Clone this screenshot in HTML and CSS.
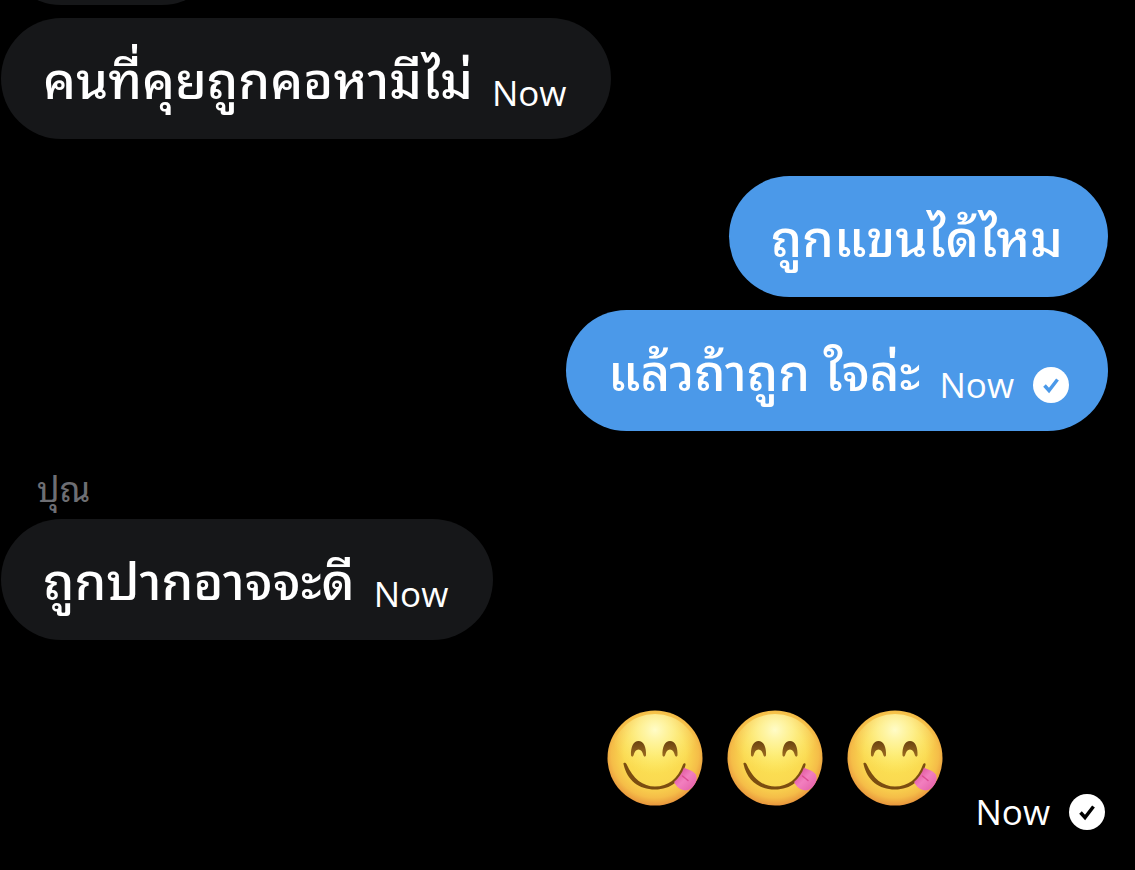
FILE: index.html
```html
<!DOCTYPE html>
<html lang="th">
<head>
    <meta charset="UTF-8">
    <meta name="viewport" content="width=device-width, initial-scale=1.0">
    <title>Chat</title>
    <link rel="stylesheet" href="styles.css">
</head>
<body>
    <svg class="defs" aria-hidden="true">
        <defs>
            <radialGradient id="face" cx="50%" cy="46%" r="54%">
                <stop offset="0" stop-color="#fce455"/>
                <stop offset="0.6" stop-color="#fad950"/>
                <stop offset="0.85" stop-color="#f5bd48"/>
                <stop offset="1" stop-color="#e8963c"/>
            </radialGradient>
            <radialGradient id="shine" cx="50%" cy="18%" r="50%">
                <stop offset="0" stop-color="#fffcc8" stop-opacity="1"/>
                <stop offset="0.4" stop-color="#fff8a6" stop-opacity="0.7"/>
                <stop offset="1" stop-color="#fff27a" stop-opacity="0"/>
            </radialGradient>
            <linearGradient id="eye" x1="0" y1="0" x2="0" y2="1">
                <stop offset="0" stop-color="#6b4210"/>
                <stop offset="1" stop-color="#9b6c20"/>
            </linearGradient>
            <linearGradient id="tongue" x1="0" y1="0" x2="1" y2="1">
                <stop offset="0" stop-color="#d6408c"/>
                <stop offset="0.5" stop-color="#f27fbf"/>
                <stop offset="1" stop-color="#e25aa3"/>
            </linearGradient>
            <symbol id="yum" viewBox="0 0 96 96">
                <circle cx="48" cy="48" r="47.5" fill="url(#face)"/>
                <circle cx="48" cy="48" r="44" fill="url(#shine)"/>
                <path d="M24 45.500C23.500 37 26.500 31 31.500 31S39.500 37 39 45.500C38.500 47 37 47 36.500 45.500C35.500 41.500 34 39.500 31.500 39.500S27.500 41.500 26.500 45.500C26 47 24.500 47 24 45.500Z" fill="url(#eye)"/>
                <path d="M55.500 45.500C55 37 58 31 63 31S71 37 70.500 45.500C70 47 68.500 47 68 45.500C67 41.500 65.500 39.500 63 39.500S59 41.500 58 45.500C57.500 47 56 47 55.500 45.500Z" fill="url(#eye)"/>
                <path d="M16.500 54C16 52.500 18.500 52 19.500 54C26 69 36 76.500 48 76.500C61 76.500 71 69 76 54.500C77 52.500 79 53 78.500 55C75 70.500 64 79.500 48 79.500C32 79.500 20 70.500 16.500 54Z" fill="#7b4d10"/>
                <path d="M77 57.500C80 59.500 84.500 60 88 63.500C90.500 66 90 71 87.500 74.500C85 79 80.500 81.500 76 80C72 79 69 76 67 72C71.500 68 75 63.500 77 57.500Z" fill="url(#tongue)"/>
                <path d="M75.500 66L81 70.500" stroke="#dc4b92" stroke-width="1.500" stroke-linecap="round"/>
            </symbol>
            <symbol id="sent" viewBox="0 0 36 36">
                <circle cx="18" cy="18" r="18" fill="#fff"/>
                <path d="M11.500 18.500L16 23.500L24.500 12.500" fill="none" stroke="currentColor" stroke-width="3.500"/>
            </symbol>
        </defs>
    </svg>

    <main class="chat">
        <div class="bubble bubble-in bubble-empty"></div>

        <div class="bubble bubble-in">
            <p class="text">คนที่คุยถูกคอหามีไม่</p>
            <time class="time">Now</time>
        </div>

        <div class="group group-out">
            <div class="bubble bubble-out">
                <p class="text">ถูกแขนได้ไหม</p>
            </div>
            <div class="bubble bubble-out">
                <p class="text">แล้วถ้าถูก ใจล่ะ</p>
                <time class="time">Now</time>
                <svg class="check" role="img" aria-label="Sent"><use href="#sent"/></svg>
            </div>
        </div>

        <div class="group">
            <h2 class="sender">ปุณ</h2>
            <div class="bubble bubble-in">
                <p class="text">ถูกปากอาจจะดี</p>
                <time class="time">Now</time>
            </div>
        </div>

        <div class="reaction">
            <div class="emojis">
                <svg class="emoji" role="img" aria-label="Yum"><use href="#yum"/></svg>
                <svg class="emoji" role="img" aria-label="Yum"><use href="#yum"/></svg>
                <svg class="emoji" role="img" aria-label="Yum"><use href="#yum"/></svg>
            </div>
            <time class="time">Now</time>
            <svg class="check" role="img" aria-label="Sent"><use href="#sent"/></svg>
        </div>
    </main>
</body>
</html>
```
FILE: styles.css
```css
body {
    margin: 0;
    background-color: #000;
    color: #fff;
    font-family: "Open Sans", "Noto Sans Thai Looped", "Noto Sans Thai", "Loma", sans-serif;
    overflow: hidden;
}

.defs {
    position: absolute;
    width: 0;
    height: 0;
}

.chat {
    display: flex;
    flex-direction: column;
    align-items: flex-start;
    margin-top: -116px;
    padding: 0 27px 0 1px;
}

.bubble {
    display: flex;
    align-items: flex-end;
    box-sizing: border-box;
    min-height: 121px;
    padding: 28px 45px 28px 42px;
    border-radius: 61px;
}

.bubble-in {
    background-color: #161719;
    margin-bottom: 13px;
}

.bubble-out {
    background-color: #4b99e9;
    color: #fff;
}

.bubble-out .check {
    color: #4b99e9;
    margin-right: -6px;
}

.bubble-empty {
    width: 20%;
}

.text {
    margin: 0;
    font-size: 51px;
    font-weight: 500;
    line-height: 63px;
    white-space: nowrap;
}

.time {
    margin-left: 19px;
    font-size: 35px;
    line-height: 36px;
}

.group {
    display: flex;
    flex-direction: column;
    align-items: flex-start;
}

.group-out {
    align-self: flex-end;
    align-items: flex-end;
    gap: 13px;
    margin-top: 24px;
}

.sender {
    margin: 34px 0 6px 36px;
    color: #6d6e73;
    font-size: 35px;
    font-weight: 400;
    line-height: 48px;
}

.check {
    width: 36px;
    height: 36px;
    margin-left: 19px;
    color: #000;
}

.reaction {
    display: flex;
    align-self: flex-end;
    align-items: flex-end;
    margin-top: 57px;
    padding-right: 3px;
}

.emojis {
    display: flex;
    gap: 24px;
    margin-right: 13px;
    padding-bottom: 24px;
}

.emoji {
    width: 96px;
    height: 96px;
}
```
